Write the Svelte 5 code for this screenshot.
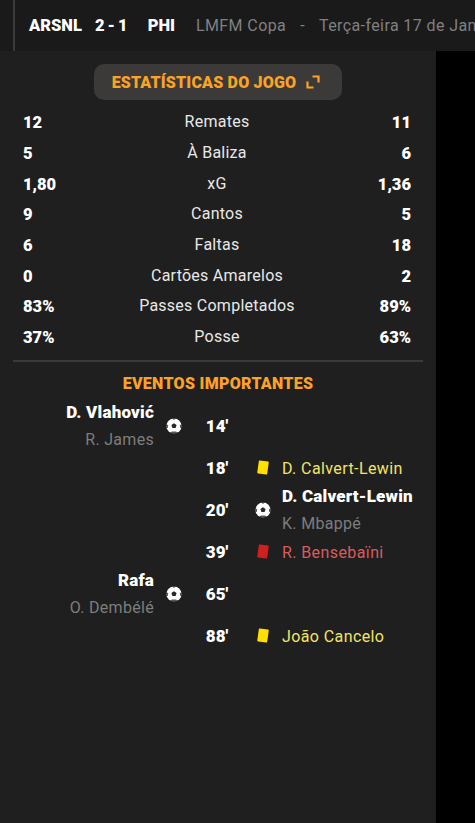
<script>
  const stats = [
    { home: '12', label: 'Remates', away: '11' },
    { home: '5', label: 'À Baliza', away: '6' },
    { home: '1,80', label: 'xG', away: '1,36' },
    { home: '9', label: 'Cantos', away: '5' },
    { home: '6', label: 'Faltas', away: '18' },
    { home: '0', label: 'Cartões Amarelos', away: '2' },
    { home: '83%', label: 'Passes Completados', away: '89%' },
    { home: '37%', label: 'Posse', away: '63%' },
  ];

  const events = [
    { min: "14'", side: 'home', type: 'goal', name: 'D. Vlahović', assist: 'R. James' },
    { min: "18'", side: 'away', type: 'yellow', name: 'D. Calvert-Lewin' },
    { min: "20'", side: 'away', type: 'goal', name: 'D. Calvert-Lewin', assist: 'K. Mbappé' },
    { min: "39'", side: 'away', type: 'red', name: 'R. Bensebaïni' },
    { min: "65'", side: 'home', type: 'goal', name: 'Rafa', assist: 'O. Dembélé' },
    { min: "88'", side: 'away', type: 'yellow', name: 'João Cancelo' },
  ];
</script>

{#snippet who(ev)}
  {#if ev.type === 'goal'}
    <div class="scorer">{ev.name}</div>
    <div class="assist">{ev.assist}</div>
  {:else}
    <div class="booked" class:red={ev.type === 'red'}>{ev.name}</div>
  {/if}
{/snippet}

{#snippet mark(type)}
  {#if type === 'goal'}
    <svg class="ball" viewBox="0 0 16 16" aria-hidden="true">
      <circle cx="8" cy="8" r="7.600" fill="#fff" />
      <path d="M8 5.200l2.600 1.900-1 3H6.400l-1-3z" fill="#2a2a2a" />
      <path d="M6 .3h4L8 2zM.2 6.500l2 .6-.4 3-1.300-.2zM15.800 6.500l-2 .6.4 3 1.300-.2zM4 14.800l2-1.400h4l2 1.400-2 1H6z" fill="#1f1f1f" opacity=".75" />
    </svg>
  {:else}
    <span class="card" class:red={type === 'red'}></span>
  {/if}
{/snippet}

<div class="page">
  <header class="topbar">
    <div class="match">
      <span class="team">ARSNL</span>
      <span class="score">2 - 1</span>
      <span class="team">PHI</span>
      <span class="meta league">LMFM Copa</span>
      <span class="meta dash">-</span>
      <span class="meta">Terça-feira 17 de Janeiro</span>
    </div>
  </header>

  <main class="panel">
    <div class="tab-wrap">
      <button class="tab">
        ESTATÍSTICAS DO JOGO
        <svg viewBox="0 0 14 14" aria-hidden="true">
          <path d="M6.500 1.500H12.500V7.500M7.500 12.500H1.500V6.500" fill="none" stroke="#fca326" stroke-width="2.200" />
        </svg>
      </button>
    </div>

    <section class="stats">
      {#each stats as s}
        <div class="stat">
          <span class="num">{s.home}</span>
          <span class="label">{s.label}</span>
          <span class="num right">{s.away}</span>
        </div>
      {/each}
    </section>

    <section class="events">
      <h3>EVENTOS IMPORTANTES</h3>
      {#each events as ev}
        <div class="event" class:tall={ev.type === 'goal'}>
          <div class="side left">
            {#if ev.side === 'home'}{@render who(ev)}{/if}
          </div>
          <div class="icon">
            {#if ev.side === 'home'}{@render mark(ev.type)}{/if}
          </div>
          <div class="min">{ev.min}</div>
          <div class="icon after">
            {#if ev.side === 'away'}{@render mark(ev.type)}{/if}
          </div>
          <div class="side">
            {#if ev.side === 'away'}{@render who(ev)}{/if}
          </div>
        </div>
      {/each}
    </section>
  </main>
</div>

<style>
  :global(body) {
    background: #000;
    font-family: Roboto, 'Liberation Sans', sans-serif;
    overflow: hidden;
  }

  .page {
    width: 475px;
    height: 823px;
    overflow: hidden;
  }

  .topbar {
    height: 51px;
    background: #1a1a1a;
    padding-left: 13px;
    box-sizing: border-box;
  }

  .match {
    height: 100%;
    border-left: 2px solid #3a3a3a;
    padding-left: 14px;
    display: flex;
    align-items: center;
    white-space: nowrap;
  }

  .team {
    font-size: 16.500px;
    font-weight: 900;
    color: #fff;
  }

  .score {
    font-size: 16.500px;
    font-weight: 900;
    color: #fff;
    margin: 0 20px 0 13px;
    word-spacing: -1px;
  }

  .meta {
    font-size: 16px;
    letter-spacing: .4px;
    color: #808080;
    margin-left: 14px;
  }

  .league {
    margin-left: 21px;
  }

  .panel {
    width: 436px;
    height: 772px;
    background: #1f1f1f;
    box-sizing: border-box;
    padding: 13px 13px 0;
  }

  .tab-wrap {
    display: flex;
    justify-content: center;
  }

  .tab {
    width: 248px;
    height: 36px;
    background: #3b3a39;
    border: none;
    border-radius: 10px;
    color: #fca326;
    font-family: inherit;
    font-size: 16px;
    letter-spacing: .2px;
    font-weight: 900;
    display: flex;
    align-items: center;
    justify-content: center;
    gap: 10px;
    padding: 0 4px 0 0;
  }

  .tab svg {
    width: 14px;
    height: 14px;
  }

  .stats {
    margin-top: 7px;
    padding: 0 12px 7px 10px;
    border-bottom: 2px solid #3a3a3a;
  }

  .stat {
    height: 30.700px;
    display: grid;
    grid-template-columns: 60px 1fr 60px;
    align-items: center;
    color: #fff;
  }

  .num {
    font-size: 16.500px;
    font-weight: 900;
    padding-top: 1px;
  }

  .right {
    text-align: right;
  }

  .label {
    font-size: 16px;
    letter-spacing: .25px;
    color: #e8e8e8;
    text-align: center;
    padding-bottom: 1px;
  }

  .events h3 {
    margin: 12px 0 5px;
    font-size: 16px;
    letter-spacing: .3px;
    font-weight: 900;
    color: #fca326;
    text-align: center;
    line-height: 20px;
  }

  .event {
    display: grid;
    grid-template-columns: 141px 40px 46px 42px 1fr;
    align-items: center;
    min-height: 28px;
  }

  .event.tall {
    min-height: 56px;
  }

  .side.left {
    text-align: right;
  }

  .icon {
    display: flex;
    justify-content: center;
    margin-bottom: 2px;
  }

  .icon.after {
    padding-left: 3px;
  }

  .min {
    font-size: 17px;
    font-weight: 900;
    color: #fff;
    text-align: center;
    margin-bottom: 2px;
  }

  .scorer {
    font-size: 17px;
    letter-spacing: .2px;
    font-weight: 900;
    color: #fff;
    line-height: 27px;
    white-space: nowrap;
  }

  .assist {
    font-size: 16px;
    letter-spacing: .3px;
    color: #7d7d7d;
    line-height: 28px;
  }

  .booked {
    font-size: 16px;
    letter-spacing: .4px;
    color: #f3e565;
    white-space: nowrap;
    margin-bottom: 1px;
  }

  .booked.red {
    color: #d85c5c;
  }

  .ball {
    width: 16px;
    height: 16px;
  }

  .card {
    width: 10px;
    height: 13px;
    background: #ffdf00;
    border-radius: 1px;
    transform: rotate(8deg);
  }

  .card.red {
    background: #d01f1f;
  }
</style>
